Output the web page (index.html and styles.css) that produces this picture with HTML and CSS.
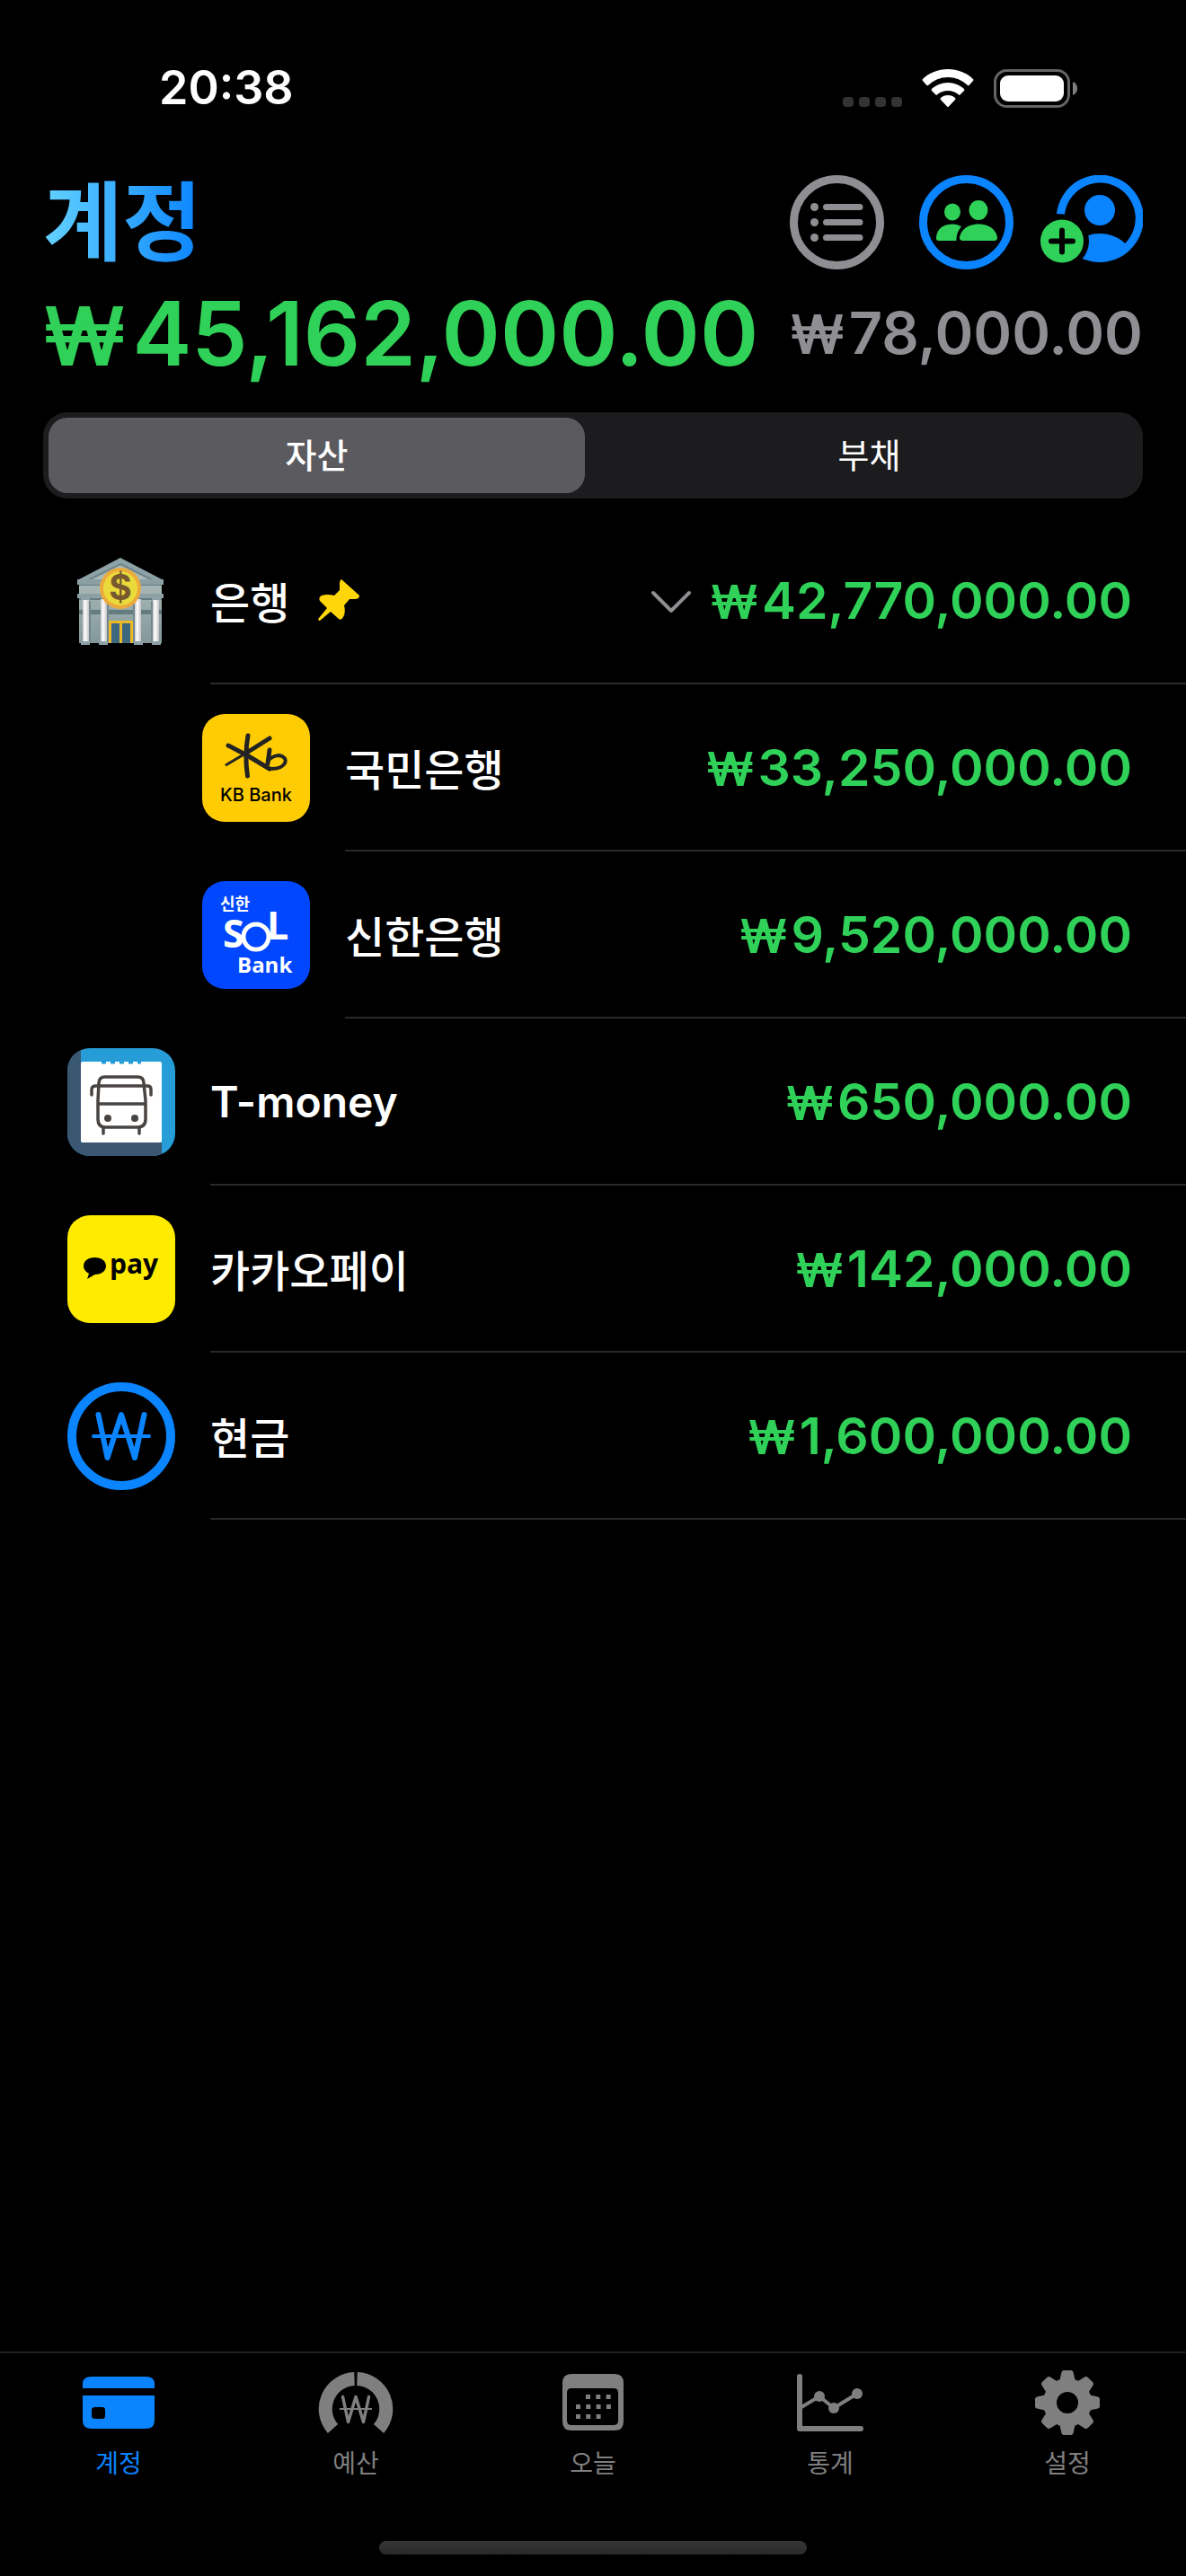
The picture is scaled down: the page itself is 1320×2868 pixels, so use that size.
FILE: index.html
```html
<!DOCTYPE html>
<html lang="ko">
<head>
<meta charset="utf-8">
<meta name="viewport" content="width=device-width, initial-scale=1">
<title>계정</title>
<link rel="stylesheet" href="styles.css">
</head>
<body>
<div class="status">
  <time class="clock">20:38</time>
  <div class="status-icons">
    <svg width="66" height="43" viewBox="0 0 66 43" fill="#333" aria-hidden="true"><rect x="0" y="31" width="12" height="11" rx="4"/><rect x="18" y="31" width="12" height="11" rx="4"/><rect x="36" y="31" width="12" height="11" rx="4"/><rect x="54" y="31" width="12" height="11" rx="4"/></svg>
    <svg width="58" height="43" viewBox="0 0 58 43" fill="#fff" aria-hidden="true"><path d="M29 0C40 0 50 4 57 11Q58 12 57 13L52.500 18Q52 18.500 51 18Q41.500 9 29 9T7 18Q6 18.500 5.500 18L1 13Q0 12 1 11C8 4 18 0 29 0Z"/><path d="M29 15C36 15 42.500 18 47 22Q48 23 47 24L42.500 28.500Q42 29 41 28.500C38 25.500 33.500 24 29 24S20 25.500 17 28.500Q16 29 15.500 28.500L11 24Q10 23 11 22C15.500 18 22 15 29 15Z"/><path d="M29 29Q34 29 37 32Q38 33 37 34L30 41.500Q29 42.500 28 41.500L21 34Q20 33 21 32Q24 29 29 29Z"/></svg>
    <svg width="94" height="43" viewBox="0 0 94 43" aria-hidden="true"><rect x="1.500" y="1.500" width="82" height="40" rx="13" fill="none" stroke="#666" stroke-width="3"/><rect x="7" y="7" width="71" height="29" rx="9" fill="#fff"/><path d="M88 14Q93 16 93 21.500T88 29Z" fill="#7f7f7f"/></svg>
  </div>
</div>

<header class="header">
  <div class="title-row">
    <h1 class="title">계정</h1>
    <div class="actions">
      <button class="icon-button" aria-label="목록"><svg width="105" height="105" viewBox="0 0 105 105" aria-hidden="true"><circle cx="52.500" cy="52.500" r="48" fill="none" stroke="#8e8e93" stroke-width="9"/><path d="M40.500 35.500H78M40.500 52.500H78M40.500 69.500H78" stroke="#8e8e93" stroke-width="7" stroke-linecap="round"/><g fill="#8e8e93"><circle cx="27.500" cy="35.500" r="4.500"/><circle cx="27.500" cy="52.500" r="4.500"/><circle cx="27.500" cy="69.500" r="4.500"/></g></svg></button>
      <button class="icon-button" aria-label="공유"><svg width="105" height="105" viewBox="0 0 105 105" aria-hidden="true"><circle cx="52.500" cy="52.500" r="48" fill="none" stroke="#0a84ff" stroke-width="9"/><g fill="#30d158"><ellipse cx="37" cy="41" rx="9" ry="9.500"/><ellipse cx="66" cy="39" rx="10.500" ry="11"/><path d="M37 54.500Q43 54.500 47 57.500Q41 64 41.500 73H22Q18.500 73 19 69Q21 54.500 37 54.500Z"/><path d="M66 54.500C78 54.500 86 61 87 69.500Q87 73 83.500 73H48.500Q44.500 73 45 69C47 60 55 54.500 66 54.500Z"/></g></svg></button>
      <button class="icon-button" aria-label="구성원 추가"><svg width="114" height="105" viewBox="0 0 114 105" aria-hidden="true"><defs><clipPath id="ring"><circle cx="66" cy="48.500" r="48.500"/></clipPath></defs><path d="M22.500 43.500A44 44 0 1 1 96 80.500" fill="none" stroke="#0a84ff" stroke-width="9"/><circle cx="66" cy="39" r="17" fill="#0a84ff"/><ellipse cx="66" cy="94" rx="36" ry="29" fill="#0a84ff" clip-path="url(#ring)"/><circle cx="24" cy="73.500" r="30" fill="#000"/><circle cx="24" cy="73.500" r="24" fill="#30d158"/><path d="M12 73.500H36M24 61.500V85.500" stroke="#000" stroke-width="6" stroke-linecap="round"/></svg></button>
    </div>
  </div>
  <div class="totals">
    <strong class="total"><span class="won">₩</span>45,162,000.00</strong>
    <span class="due"><span class="won">₩</span>78,000.00</span>
  </div>
  <div class="segments">
    <button class="segment selected" aria-pressed="true">자산</button>
    <button class="segment" aria-pressed="false">부채</button>
  </div>
</header>

<main>
  <ul class="accounts">
    <li class="account">
      <svg class="account-icon" viewBox="0 0 120 120" aria-hidden="true">
        <defs><linearGradient id="pillar"><stop offset="0" stop-color="#c9c9cc"/><stop offset=".4" stop-color="#fff"/><stop offset="1" stop-color="#c3c3c6"/></linearGradient><linearGradient id="wall" x2="0" y2="1"><stop offset="0" stop-color="#a9b9b6"/><stop offset="1" stop-color="#83979b"/></linearGradient></defs>
        <path d="M13 38H105V107H13Z" fill="url(#wall)"/>
        <path d="M59 12L107 37H11Z" fill="#8da2a6"/><path d="M59 19L95 37H23Z" fill="#a9bcbb" stroke="#6e8489" stroke-width="2"/>
        <path d="M11 36H107V42H11ZM11 52H107V57H11Z" fill="#8ca0a4"/><path d="M13 42H105V43H13ZM13 57H105V59H13ZM13 70H105V75H13Z" fill="#647b80"/>
        <g fill="url(#pillar)"><rect x="17" y="58" width="7" height="48"/><rect x="37" y="58" width="7" height="48"/><rect x="75" y="58" width="7" height="48"/><rect x="95" y="58" width="7" height="48"/></g>
        <g fill="#71878d"><rect x="24" y="60" width="2" height="46"/><rect x="44" y="60" width="2" height="46"/><rect x="73" y="60" width="2" height="46"/><rect x="93" y="60" width="2" height="46"/></g>
        <g fill="#8da2a6"><rect x="15" y="56" width="10" height="3"/><rect x="94" y="56" width="10" height="3"/><rect x="15" y="105" width="10" height="4"/><rect x="35" y="105" width="10" height="4"/><rect x="74" y="105" width="10" height="4"/><rect x="94" y="105" width="10" height="4"/></g>
        <rect x="46" y="82" width="27" height="25" fill="#ecb927"/><path d="M49 85H58V107H49ZM61 85H70V107H61Z" fill="#3d677f"/>
        <circle cx="59" cy="46" r="23" fill="#edaa3c"/><circle cx="59" cy="46" r="19" fill="#eadb3b"/>
        <text x="59" y="59" text-anchor="middle" class="coin">$</text>
      </svg>
      <div class="account-body">
        <span class="name">은행</span>
        <svg class="pin" width="46" height="46" viewBox="0 0 46 46" fill="#ffd60a" aria-hidden="true"><path d="M26 0L46 18Q46 22 41 22H35L29 29Q31 37 28 42Q26 46 23 44L14 36L2 46Q-1 46 1 43L10 32L2 24Q0 20 4 18Q10 16 18 18L24 12V4Q24 1 26 0Z"/></svg>
        <svg class="chevron" width="44" height="32" viewBox="0 0 44 32" fill="none" stroke="#8e8e93" stroke-width="4" stroke-linecap="round" stroke-linejoin="round" aria-hidden="true"><path d="M2 8L22 28L42 8"/></svg>
        <span class="amount"><span class="won">₩</span>42,770,000.00</span>
      </div>
    </li>
    <li class="account child">
      <svg class="account-icon" viewBox="0 0 120 120" role="img" aria-label="KB Bank"><rect width="120" height="120" rx="25" fill="#ffcc04"/><g fill="none" stroke="#232323" stroke-linecap="round" stroke-linejoin="round"><path d="M51 24Q47 46 50.500 69" stroke-width="5"/><path d="M29 35L50 46L75 61" stroke-width="5"/><path d="M75 27L48 44" stroke-width="5"/><path d="M48 44L27 56.500" stroke-width="3"/><path d="M75 40L73 55" stroke-width="5"/><path d="M73 52Q79 46 86 46C97 48 95 61 76 61" stroke-width="4"/></g><text x="20" y="97" class="kb">KB Bank</text></svg>
      <div class="account-body">
        <span class="name">국민은행</span>
        <span class="amount"><span class="won">₩</span>33,250,000.00</span>
      </div>
    </li>
    <li class="account child">
      <svg class="account-icon" viewBox="0 0 120 120" role="img" aria-label="신한 SOL Bank"><rect width="120" height="120" rx="25" fill="#0047ff"/><g fill="#fff"><text x="20" y="32" class="sol-ko">신한</text><text x="23" y="74" class="sol">S</text><circle cx="60" cy="62" r="14" fill="none" stroke="#fff" stroke-width="5"/><text x="72" y="65" class="sol">L</text><text x="39" y="102" class="sol-bank">Bank</text></g></svg>
      <div class="account-body">
        <span class="name">신한은행</span>
        <span class="amount"><span class="won">₩</span>9,520,000.00</span>
      </div>
    </li>
    <li class="account">
      <svg class="account-icon" viewBox="0 0 120 120" aria-hidden="true"><defs><clipPath id="tile"><rect width="120" height="120" rx="25"/></clipPath></defs><g clip-path="url(#tile)"><path d="M0 0H120V120H0Z" fill="#279dd8"/><path d="M0 0H15V105H105V120H0Z" fill="#3a5872"/><rect x="15" y="15" width="90" height="90" rx="2" fill="#fff"/><path d="M38 16H82" stroke="#279dd8" stroke-width="3" stroke-dasharray="5 5"/></g><g fill="none" stroke="#484442" stroke-width="3.500" stroke-linecap="round"><path d="M42 32H78Q85 32 85 39L87 58V79Q87 88 78 88H42Q34 88 34 79V58L35 39Q35 32 42 32Z"/><path d="M27 52V46Q27 42 32 42H89Q93 42 93 46V52M35 62H86M40 89V95M80 89V95"/></g><g fill="#484442"><circle cx="45" cy="78" r="4"/><circle cx="75" cy="78" r="4"/></g></svg>
      <div class="account-body">
        <span class="name latin">T-money</span>
        <span class="amount"><span class="won">₩</span>650,000.00</span>
      </div>
    </li>
    <li class="account">
      <svg class="account-icon" viewBox="0 0 120 120" role="img" aria-label="kakao pay"><rect width="120" height="120" rx="25" fill="#ffeb00"/><path d="M30.500 47C38 47 43 51 43 56.500S38 66 30.500 66L22 71L24 65Q18 62 18 56.500C18 51 23 47 30.500 47Z"/><text x="47" y="65" class="pay">pay</text></svg>
      <div class="account-body">
        <span class="name">카카오페이</span>
        <span class="amount"><span class="won">₩</span>142,000.00</span>
      </div>
    </li>
    <li class="account">
      <svg class="account-icon" viewBox="0 0 120 120" fill="none" stroke="#0a84ff" stroke-linecap="round" stroke-linejoin="round" aria-hidden="true"><circle cx="60" cy="60" r="55" stroke-width="10"/><path d="M34.500 36L44.500 84L60 36L75 84L85.500 36" stroke-width="6"/><path d="M29 60H91" stroke-width="4"/></svg>
      <div class="account-body">
        <span class="name">현금</span>
        <span class="amount"><span class="won">₩</span>1,600,000.00</span>
      </div>
    </li>
  </ul>
</main>

<footer class="footer">
  <nav class="tabs">
    <a class="tab current" href="#accounts" aria-current="page"><svg width="80" height="72" viewBox="0 0 80 72" fill="currentColor" aria-hidden="true"><path d="M0 20V15Q0 7 10 7H70Q80 7 80 15V20Z"/><path fill-rule="evenodd" d="M0 28H80V56Q80 65 70 65H10Q0 65 0 56ZM14 41Q10 41 10 44V51Q10 54 14 54H22Q25 54 25 51V44Q25 41 22 41Z"/></svg>계정</a>
    <a class="tab" href="#budget"><svg width="84" height="72" viewBox="0 0 84 72" fill="none" stroke="currentColor" aria-hidden="true"><path d="M40.500 9.500A33.500 33.500 0 0 0 16.500 65M43.500 9.500A33.500 33.500 0 0 1 67.500 65" stroke-width="15"/><path d="M27.500 29.500L33.500 57.500L42 29.500L50.500 57.500L56.500 29.500" stroke-width="3.500" stroke-linecap="round" stroke-linejoin="round"/><path d="M24 43H60" stroke-width="2"/></svg>예산</a>
    <a class="tab" href="#today"><svg width="70" height="72" viewBox="0 0 70 72" fill="currentColor" aria-hidden="true"><path fill-rule="evenodd" d="M11 4H59Q69 4 69 14V57Q69 67 59 67H11Q1 67 1 57V14Q1 4 11 4ZM11 20Q6 20 6 25V56Q6 61 11 61H58Q63 61 63 56V25Q63 20 58 20Z"/><path d="M27 29.500H58M16 40.500H58M16 51.500H47" stroke="currentColor" stroke-width="5" stroke-dasharray="5 6.300"/></svg>오늘</a>
    <a class="tab" href="#stats"><svg width="76" height="72" viewBox="0 0 76 72" fill="none" stroke="currentColor" stroke-linecap="round" stroke-linejoin="round" aria-hidden="true"><path d="M4 7V65H72" stroke-width="6"/><path d="M6 41L26 29L42 42L68 26" stroke-width="4"/><g fill="currentColor" stroke="none"><circle cx="26" cy="29" r="6"/><circle cx="42" cy="42" r="6"/><circle cx="68" cy="26" r="6"/></g></svg>통계</a>
    <a class="tab" href="#settings"><svg width="72" height="72" viewBox="0 0 72 72" aria-hidden="true"><g fill="none" stroke="currentColor"><circle cx="36" cy="36" r="19.500" stroke-width="15"/></g><g fill="currentColor"><path id="tooth" d="M27 13L29.500 2Q30 0 32 0H40Q42 0 42.500 2L45 13Z"/><use href="#tooth" transform="rotate(45 36 36)"/><use href="#tooth" transform="rotate(90 36 36)"/><use href="#tooth" transform="rotate(135 36 36)"/><use href="#tooth" transform="rotate(180 36 36)"/><use href="#tooth" transform="rotate(225 36 36)"/><use href="#tooth" transform="rotate(270 36 36)"/><use href="#tooth" transform="rotate(315 36 36)"/></g></svg>설정</a>
  </nav>
  <div class="home-indicator"></div>
</footer>
</body>
</html>
```
FILE: styles.css
```css
* { box-sizing: border-box; }

body {
  margin: 0;
  min-height: 100vh;
  display: flex;
  flex-direction: column;
  background: #000;
  color: #fff;
  font-family: Inter, "Noto Sans CJK KR", sans-serif;
}

button {
  border: 0;
  padding: 0;
  background: none;
  color: inherit;
  font: inherit;
}

svg { display: block; flex: none; }

main { flex: 1; }

/* Status bar */
.status {
  display: flex;
  justify-content: space-between;
  align-items: center;
  padding: 62px 120px 53px 177px;
}

.clock {
  font-size: 52px;
  line-height: 72px;
  font-weight: 600;
}

.status-icons { display: flex; gap: 22px; }

/* Header */
.header { padding: 0 48px; }

.title-row {
  display: flex;
  justify-content: space-between;
  align-items: center;
}

.title {
  margin: 0;
  font-size: 96px;
  line-height: 120px;
  font-weight: 700;
  background: linear-gradient(90deg, #64d2ff, #0a84ff);
  background-clip: text;
  -webkit-background-clip: text;
  color: transparent;
}

.actions { display: flex; gap: 39px; }
.icon-button:last-child { margin-left: -9px; }

.totals {
  display: flex;
  justify-content: space-between;
  align-items: center;
  line-height: 128px;
  margin-bottom: 24px;
}

.won {
  font-family: Inter, sans-serif;
  font-size: 92%;
  line-height: 1;
  margin-right: 0.08em;
}

.total {
  font-size: 99px;
  font-weight: 600;
  color: #30d158;
}

.due {
  font-size: 65px;
  font-weight: 600;
  color: #8e8e93;
}

.segments {
  display: grid;
  grid-template-columns: 1fr 1fr;
  padding: 6px;
  gap: 18px;
  border-radius: 27px;
  background: #1c1c1e;
}

.segment {
  height: 84px;
  padding-bottom: 6px;
  border-radius: 21px;
  font-size: 38px;
  font-weight: 400;
}

.segment.selected { background: #5b5a5f; font-weight: 500; }

/* Accounts */
.accounts {
  list-style: none;
  margin: 21px 0 0;
  padding: 0;
}

.account {
  display: flex;
  align-items: center;
  gap: 39px;
  padding-left: 75px;
}

.account.child { padding-left: 225px; }

.account-icon { width: 120px; height: 120px; }

.account-body {
  flex: 1;
  height: 186px;
  display: flex;
  align-items: center;
  padding-right: 60px;
  border-bottom: 2px solid #29292b;
}

.name {
  font-size: 48px;
  font-weight: 500;
}

.name.latin { font-weight: 600; }

.pin { margin-left: 32px; }

.chevron { margin-left: auto; }
.chevron + .amount { margin-left: 22px; }

.amount {
  margin-left: auto;
  font-size: 57px;
  font-weight: 600;
  color: #30d158;
}

.coin { font: 700 39px Inter, sans-serif; fill: #78592f; }
.kb { font: 500 20px Inter, sans-serif; }
.sol-ko { font: 700 18px "Noto Sans CJK KR", sans-serif; }
.sol { font: 700 43px "Open Sans", sans-serif; }
.sol-bank { font: 700 24px "Open Sans", sans-serif; }
.pay { font: 700 30px "Open Sans", sans-serif; }

/* Tab bar */
.footer {
  padding-bottom: 24px;
  border-top: 2px solid #1e1e1f;
}

.tabs {
  display: grid;
  grid-template-columns: repeat(5, 1fr);
  padding-top: 19px;
}

.tab {
  display: flex;
  flex-direction: column;
  align-items: center;
  gap: 10px;
  color: #7f7f7f;
  font-size: 28px;
  line-height: 44px;
  font-weight: 400;
  text-decoration: none;
}

.tab.current { color: #0a84ff; }

.home-indicator {
  width: 36%;
  height: 15px;
  margin: 64px auto 0;
  border-radius: 8px;
  background: linear-gradient(#353535, #2a2a2a);
}
```
